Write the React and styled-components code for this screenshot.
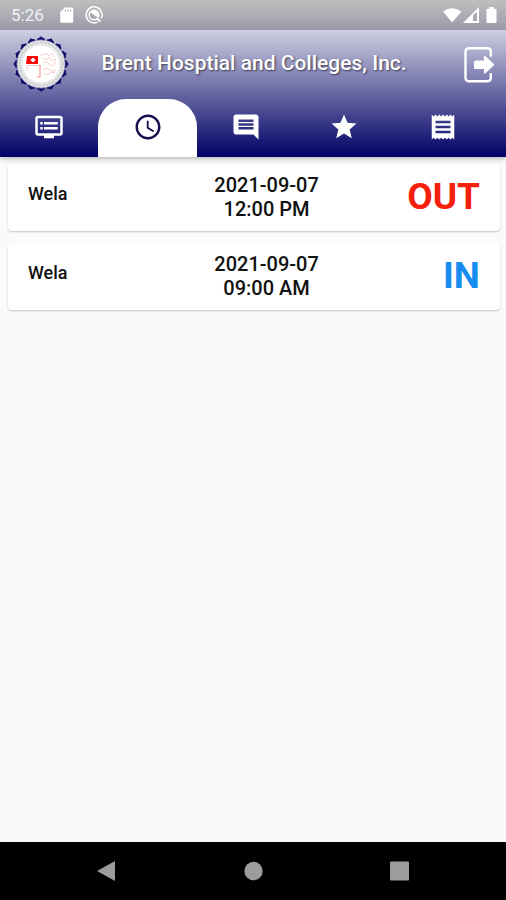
import { MdComment, MdDvr, MdReceipt, MdSchedule, MdStar } from "react-icons/md";
import styled, { createGlobalStyle } from "styled-components";

const TABS = [
  { label: "Feed", icon: MdDvr },
  { label: "Attendance", icon: MdSchedule, active: true },
  { label: "Messages", icon: MdComment },
  { label: "Grades", icon: MdStar },
  { label: "Billing", icon: MdReceipt },
];

const LOGS = [
  { name: "Wela", date: "2021-09-07", time: "12:00 PM", type: "OUT" },
  { name: "Wela", date: "2021-09-07", time: "09:00 AM", type: "IN" },
];

export default function App() {
  return (
    <Screen>
      <GlobalStyle />
      <Header>
        <StatusBar>
          <StatusGroup>
            <Clock>5:26</Clock>
            <SdCardIcon />
            <SyncIcon />
          </StatusGroup>
          <SignalIcons />
        </StatusBar>
        <TitleBar>
          <SchoolLogo />
          <Title>Brent Hosptial and Colleges, Inc.</Title>
          <LogoutButton type="button" aria-label="Log out">
            <LogoutIcon />
          </LogoutButton>
        </TitleBar>
        <Tabs>
          {TABS.map(({ label, icon: Icon, active }) => (
            <Tab key={label} type="button" aria-label={label} $active={active}>
              <Icon size={30} />
            </Tab>
          ))}
        </Tabs>
      </Header>
      <LogList>
        {LOGS.map((log) => (
          <LogCard key={log.time}>
            <LogName>{log.name}</LogName>
            <LogTime>
              <div>{log.date}</div>
              <div>{log.time}</div>
            </LogTime>
            <LogType $type={log.type}>{log.type}</LogType>
          </LogCard>
        ))}
      </LogList>
      <NavBar>
        <NavButton type="button" aria-label="Back">
          <svg width="22" height="22" viewBox="0 0 22 22">
            <path d="M1 11 19 1v20z" fill="currentColor" />
          </svg>
        </NavButton>
        <NavButton type="button" aria-label="Home">
          <svg width="22" height="22" viewBox="0 0 22 22">
            <circle cx="11.5" cy="11" r="9.2" fill="currentColor" />
          </svg>
        </NavButton>
        <NavButton type="button" aria-label="Recent apps">
          <svg width="22" height="22" viewBox="0 0 22 22">
            <rect x="2" y="1.5" width="19" height="19" rx="1" fill="currentColor" />
          </svg>
        </NavButton>
      </NavBar>
    </Screen>
  );
}

function SdCardIcon() {
  return (
    <svg width="14" height="18" viewBox="0 0 14 18">
      <path
        d="M5 1.500h7q1.300 0 1.300 1.300v12.700q0 1.300-1.300 1.300H1.500Q.2 16.800.2 15.500V6z"
        fill="#fff"
      />
      <path d="M5.400 3.500v2.200M8 3.500v2.200M10.600 3.500v2.200" stroke="#b0b0b2" strokeWidth="1.100" />
    </svg>
  );
}

function SyncIcon() {
  return (
    <svg width="18" height="18" viewBox="0 0 18 18" fill="none" stroke="#fff">
      <path d="M12.500 16.100A8 8 0 1 1 16.200 12.500" strokeWidth="1.500" />
      <circle cx="9" cy="9" r="4.800" strokeWidth="1.500" />
      <path d="M5.600 6.400q3.400-3.600 7 0 1.500 2.500.2 5z" fill="#fff" stroke="none" />
      <path d="m12 12.500 3.300 3" strokeWidth="1.800" />
    </svg>
  );
}

function SignalIcons() {
  return (
    <svg width="56" height="18" viewBox="0 0 56 18" fill="#fff">
      <path d="M1 5.500Q10-1 19.500 5.500L10.200 16.500z" />
      <path fillRule="evenodd" d="M21 17 37 1v16zM31 15h4V5.500l-4 4z" />
      <path d="M47.200 1h4.600v1.800h1.700q1 0 1 1V16q0 1-1 1h-8q-1 0-1-1V3.800q0-1 1-1h1.700z" />
    </svg>
  );
}

function LogoutIcon() {
  return (
    <svg width="34" height="38" viewBox="0 0 34 38">
      <path
        d="M28.800 10.500V6q0-3.800-3.800-3.800H7.300Q3.500 2.200 3.500 6v25.500q0 3.800 3.800 3.800H25q3.800 0 3.800-3.800V27"
        fill="none"
        stroke="#fff"
        strokeWidth="2.400"
      />
      <path
        d="M13.500 14.500H22v-3.500q0-2 1.700-.6l8 7.400q.9.900 0 1.800l-8 7.400q-1.700 1.400-1.700-.6V23h-8.500q-1.500 0-1.500-1.500V16q0-1.500 1.500-1.500z"
        fill="#fff"
      />
    </svg>
  );
}

function SchoolLogo() {
  const points = Array.from({ length: 16 }, (_, i) => i * 22.5);
  return (
    <svg width="58" height="58" viewBox="0 0 58 58" role="img" aria-label="School seal">
      {points.map((angle) => (
        <path
          key={angle}
          d="M29 .2q1.200 1.500 3.400 2.300 1.200 1 .6 2.800L32 9h-6l-1-3.700q-.6-1.800.6-2.800Q27.800 1.700 29 .2z"
          fill="#120e68"
          transform={`rotate(${angle} 29 28)`}
        />
      ))}
      <circle cx="29" cy="28" r="24" fill="#eeeef0" stroke="#9c9cba" strokeWidth=".8" />
      <circle
        cx="29"
        cy="28"
        r="21.500"
        fill="none"
        stroke="#c0c3c7"
        strokeWidth="2.200"
        strokeDasharray="1.600 1.100"
      />
      <circle cx="29" cy="28" r="19" fill="#fff" stroke="#d0d2d4" strokeWidth=".6" />
      <path d="M15 20h11v8H14z" fill="#fa0b08" />
      <path d="M18.800 24h4.400M21 22v4" stroke="#fff" strokeWidth="2" />
      <g fill="none" stroke="#f3b4b4" strokeWidth=".7">
        <path d="M15 29v6m0-5.500h12M28 19h3l3-2 3 3 3-3 2 4M30 22l5 2 2-3 3 4 3-2v4M31 27q4-3 6 1t6-1" />
        <path d="M31 34q4-3 7 0t6 0M32 38l4 1 3-3 4 1" />
      </g>
      <path d="M26.500 29.500H28v11.500h-3" fill="none" stroke="#f78c8c" strokeWidth="1.100" />
    </svg>
  );
}

const GlobalStyle = createGlobalStyle`
  * {
    box-sizing: border-box;
  }

  body {
    margin: 0;
    font-family: Roboto, "Liberation Sans", sans-serif;
    background: #fafafa;
  }

  button {
    padding: 0;
    border: none;
    background: none;
    cursor: pointer;
  }

  svg {
    display: block;
  }
`;

const Screen = styled.div`
  display: flex;
  flex-direction: column;
  min-height: 100vh;
`;

const Header = styled.header`
  background: linear-gradient(#fff, #000066);
  box-shadow: 0 2px 5px rgba(0, 0, 0, 0.25);
`;

const StatusBar = styled.div`
  display: flex;
  justify-content: space-between;
  align-items: center;
  height: 30px;
  padding: 0 8px 0 11px;
  background: rgba(0, 0, 0, 0.25);
  color: #fff;
  font-size: 17px;
`;

const StatusGroup = styled.div`
  display: flex;
  align-items: center;
  gap: 11px;
`;

const Clock = styled.span`
  margin-right: 5px;
  opacity: 0.85;
`;

const TitleBar = styled.div`
  display: flex;
  align-items: center;
  height: 69px;
  padding: 0 10px 0 12px;
`;

const Title = styled.h1`
  flex: 1;
  margin: 0;
  padding: 0 24px 4px 0;
  color: #fff;
  font-size: 21px;
  font-weight: 500;
  text-align: center;
  text-shadow: 1px 1px 2px rgba(0, 0, 0, 0.6);
  white-space: nowrap;
`;

const LogoutButton = styled.button`
  color: #fff;
`;

const Tabs = styled.nav`
  display: flex;
  padding-right: 14px;
`;

const Tab = styled.button`
  display: flex;
  flex: 1;
  justify-content: center;
  align-items: center;
  height: 58px;
  padding-bottom: 2px;
  border-radius: 28px 28px 0 0;
  background: ${({ $active }) => ($active ? "#fff" : "transparent")};
  color: ${({ $active }) => ($active ? "#15104f" : "#fff")};
`;

const LogList = styled.main`
  display: flex;
  flex: 1;
  flex-direction: column;
  gap: 12px;
  padding: 7px 6px 8px 8px;
`;

const LogCard = styled.article`
  display: grid;
  grid-template-columns: 7fr 5fr 6fr;
  align-items: center;
  padding: 9px 20px 10px;
  border-radius: 4px;
  background: #fff;
  box-shadow: 0 1px 2px rgba(0, 0, 0, 0.22);
  font-weight: 500;
`;

const LogName = styled.div`
  padding-bottom: 6px;
  color: #111;
  font-size: 18px;
  line-height: 24px;
`;

const LogTime = styled.div`
  color: #111;
  font-size: 20px;
  line-height: 24px;
  text-align: center;
  white-space: nowrap;
`;

const LogType = styled.div`
  color: ${({ $type }) => ($type === "OUT" ? "#f5200c" : "#148cf0")};
  font-size: 37px;
  font-weight: 700;
  line-height: 44px;
  text-align: right;
`;

const NavBar = styled.footer`
  display: flex;
  justify-content: space-around;
  align-items: center;
  height: 58px;
  padding: 0 34px;
  background: #000;
`;

const NavButton = styled.button`
  color: #9c9c9c;
`;
